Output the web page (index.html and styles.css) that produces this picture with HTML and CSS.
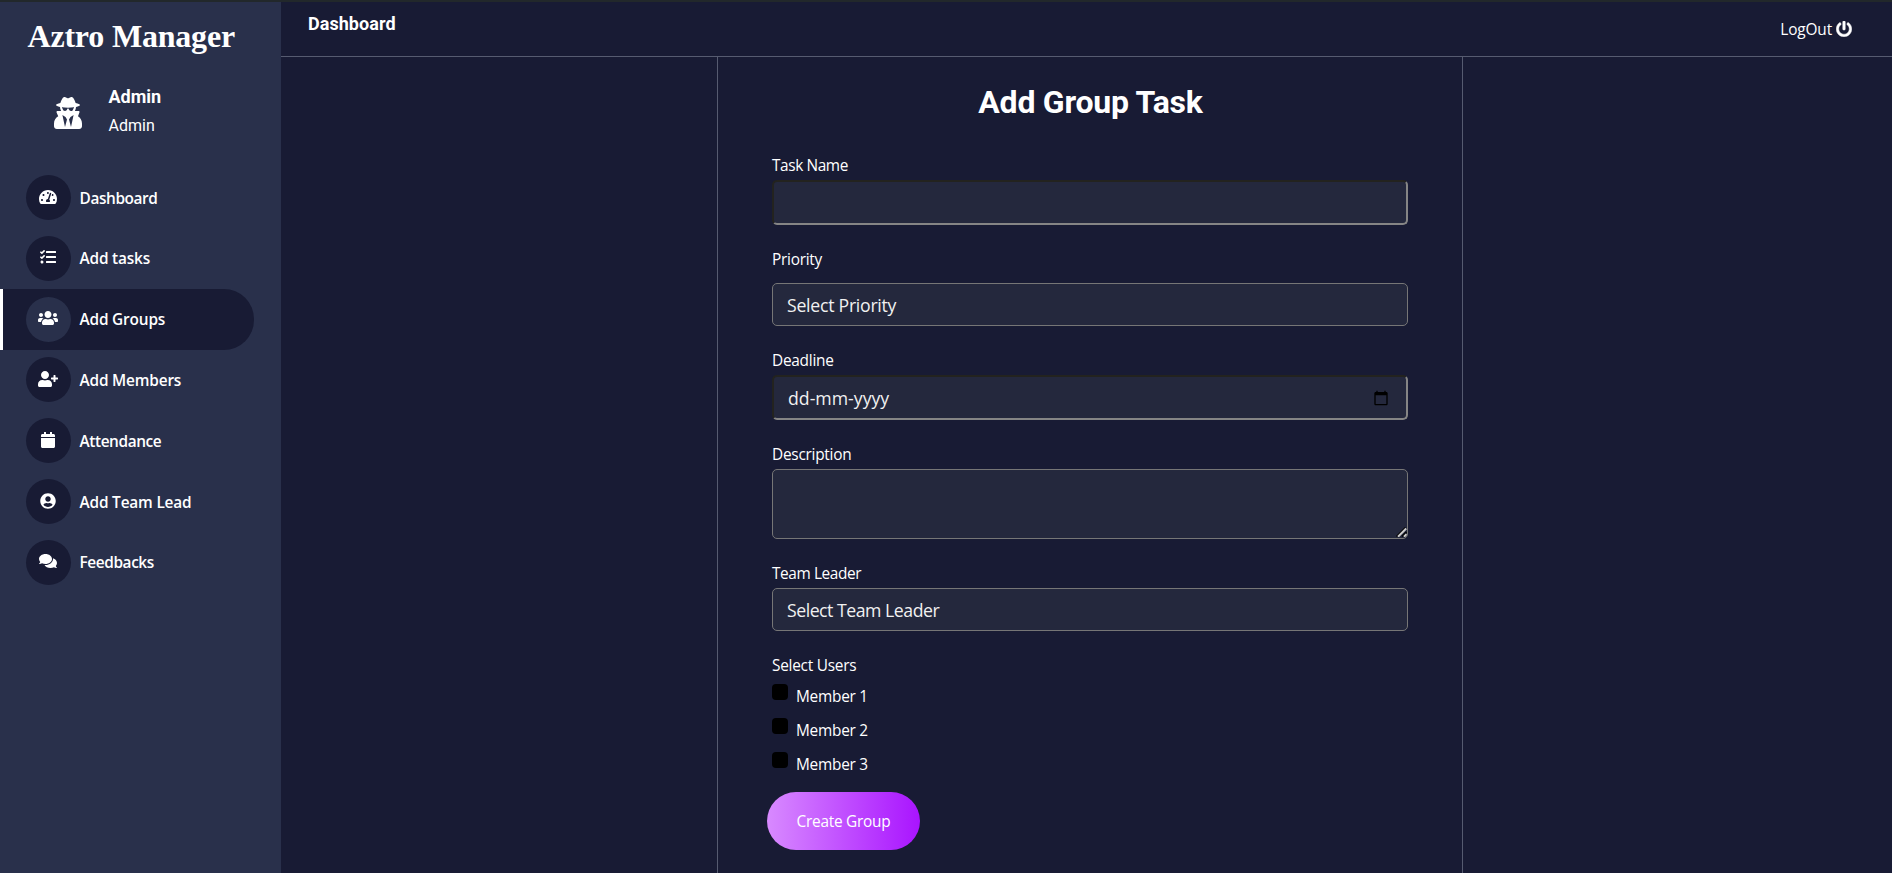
FILE: index.html
```html
<!DOCTYPE html>
<html lang="en">
<head>
<meta charset="utf-8">
<title>Aztro Manager</title>
<link rel="stylesheet" href="styles.css">
</head>
<body>
<div class="app">
  <aside class="sidebar">
    <h1 class="brand">Aztro Manager</h1>
    <div class="profile">
      <svg class="avatar" viewBox="0 0 448 512"><path d="M383.9 308.3l23.9-62.6c4-10.5-3.7-21.7-15-21.7h-58.5c11-18.9 17.8-40.6 17.8-64v-.3c39.2-7.8 64-19.1 64-31.7 0-13.3-27.3-25.1-70.1-33-9.2-32.8-27-65.8-40.6-82.8-9.5-11.9-25.9-15.6-39.5-8.8l-27.6 13.8c-9 4.5-19.6 4.5-28.6 0L182.1 3.4c-13.6-6.8-30-3.1-39.5 8.8-13.5 17-31.4 50-40.6 82.8-42.7 7.9-70 19.7-70 33 0 12.6 24.8 23.9 64 31.7v.3c0 23.4 6.8 45.1 17.8 64H56.3c-11.5 0-19.2 11.7-14.7 22.3l25.8 60.2C27.3 329.8 0 372.7 0 422.4v44.8C0 491.9 20.1 512 44.8 512h358.4c24.7 0 44.8-20.1 44.8-44.8v-44.8c0-48.4-25.8-90.4-64.1-114.1zM176 480l-41.6-192 49.6 32 24 40-32 120zm96 0l-32-120 24-40 49.6-32L272 480zm41.7-298.5c-3.9 11.9-7 24.6-16.5 33.4-10.1 9.3-48 22.4-64-25-2.8-8.4-15.4-8.4-18.3 0-17 50.2-56 32.4-64 25-9.5-8.8-12.7-21.5-16.5-33.4-.8-2.5-6.3-5.7-6.3-5.8v-10.8c28.3 3.6 61 5.8 96 5.8s67.7-2.1 96-5.8v10.8c-.1.1-5.6 3.2-6.4 5.8z"/></svg>
      <div class="who">
        <div class="who-name">Admin</div>
        <div class="who-role">Admin</div>
      </div>
    </div>
    <nav class="nav">
      <a class="nav-item"><span class="dot"><svg width="18" height="16" viewBox="0 0 576 512"><path d="M288 32C128.940 32 0 160.940 0 320c0 52.800 14.250 102.260 39.060 144.800 5.610 9.620 16.300 15.200 27.440 15.200h443c11.140 0 21.830-5.580 27.440-15.200C561.750 422.260 576 372.800 576 320c0-159.060-128.940-288-288-288zm0 64c14.710 0 26.580 10.130 30.320 23.650-1.110 2.260-2.640 4.230-3.450 6.670l-9.220 27.670c-5.130 3.490-10.970 6.010-17.640 6.010-17.670 0-32-14.330-32-32S270.330 96 288 96zM96 384c-17.670 0-32-14.330-32-32s14.330-32 32-32 32 14.330 32 32-14.330 32-32 32zm48-160c-17.670 0-32-14.330-32-32s14.330-32 32-32 32 14.330 32 32-14.330 32-32 32zm246.770-72.410l-61.330 184C343.130 347.330 352 364.540 352 384c0 11.720-3.380 22.550-8.880 32H232.880c-5.500-9.450-8.880-20.280-8.880-32 0-33.940 26.500-61.430 59.900-63.590l61.340-184.010c4.170-12.560 17.730-19.450 30.360-15.170 12.570 4.190 19.350 17.790 15.170 30.360zm14.660 57.200l15.520-46.550c3.470-1.290 7.130-2.230 11.050-2.230 17.670 0 32 14.330 32 32s-14.330 32-32 32c-11.380-.01-20.890-6.280-26.570-15.220zM480 384c-17.670 0-32-14.330-32-32s14.330-32 32-32 32 14.330 32 32-14.330 32-32 32z"/></svg></span><span class="nav-text tight">Dashboard</span></a>
      <a class="nav-item"><span class="dot"><svg width="16" height="16" viewBox="0 0 512 512"><path d="M139.61 35.5a12 12 0 0 0-17 0L58.93 98.81l-22.7-22.12a12 12 0 0 0-17 0L3.53 92.41a12 12 0 0 0 0 17l47.59 47.4a12.78 12.78 0 0 0 17.61 0l15.59-15.62L156.52 69a12.09 12.09 0 0 0 .09-17zm0 159.19a12 12 0 0 0-17 0l-63.68 63.72-22.7-22.1a12 12 0 0 0-17 0L3.53 252a12 12 0 0 0 0 17L51 316.5a12.77 12.77 0 0 0 17.6 0l15.7-15.69 72.2-72.22a12 12 0 0 0 .09-16.9zM64 368c-26.49 0-48.59 21.5-48.59 48S37.53 464 64 464a48 48 0 0 0 0-96zm432 16H208a16 16 0 0 0-16 16v32a16 16 0 0 0 16 16h288a16 16 0 0 0 16-16v-32a16 16 0 0 0-16-16zm0-320H208a16 16 0 0 0-16 16v32a16 16 0 0 0 16 16h288a16 16 0 0 0 16-16V80a16 16 0 0 0-16-16zm0 160H208a16 16 0 0 0-16 16v32a16 16 0 0 0 16 16h288a16 16 0 0 0 16-16v-32a16 16 0 0 0-16-16z"/></svg></span><span class="nav-text">Add tasks</span></a>
      <a class="nav-item active"><span class="dot"><svg width="20" height="16" viewBox="0 0 640 512"><path d="M96 224c35.3 0 64-28.7 64-64s-28.7-64-64-64-64 28.7-64 64 28.7 64 64 64zm448 0c35.3 0 64-28.7 64-64s-28.7-64-64-64-64 28.7-64 64 28.7 64 64 64zm32 32h-64c-17.6 0-33.5 7.1-45.1 18.6 40.3 22.1 68.9 62 75.1 109.4h66c17.7 0 32-14.3 32-32v-32c0-35.3-28.7-64-64-64zm-256 0c61.9 0 112-50.1 112-112S381.9 32 320 32 208 82.1 208 144s50.1 112 112 112zm76.8 32h-8.3c-20.8 10-43.9 16-68.5 16s-47.6-6-68.5-16h-8.3C179.6 288 128 339.6 128 403.2V432c0 26.5 21.5 48 48 48h288c26.5 0 48-21.5 48-48v-28.8c0-63.6-51.6-115.2-115.2-115.2zm-223.7-13.4C161.5 263.1 145.6 256 128 256H64c-35.3 0-64 28.7-64 64v32c0 17.7 14.3 32 32 32h65.9c6.3-47.4 34.9-87.3 75.2-109.4z"/></svg></span><span class="nav-text">Add Groups</span></a>
      <a class="nav-item"><span class="dot"><svg width="20" height="16" viewBox="0 0 640 512"><path d="M624 208h-64v-64c0-8.8-7.2-16-16-16h-32c-8.8 0-16 7.2-16 16v64h-64c-8.8 0-16 7.2-16 16v32c0 8.8 7.2 16 16 16h64v64c0 8.8 7.2 16 16 16h32c8.8 0 16-7.2 16-16v-64h64c8.8 0 16-7.2 16-16v-32c0-8.8-7.2-16-16-16zm-400 48c70.7 0 128-57.3 128-128S294.7 0 224 0 96 57.3 96 128s57.3 128 128 128zm89.6 32h-16.7c-22.2 10.2-46.9 16-72.9 16s-50.6-5.8-72.9-16h-16.7C60.2 288 0 348.2 0 422.4V464c0 26.5 21.5 48 48 48h352c26.5 0 48-21.5 48-48v-41.6c0-74.2-60.2-134.4-134.4-134.4z"/></svg></span><span class="nav-text">Add Members</span></a>
      <a class="nav-item"><span class="dot"><svg width="14" height="16" viewBox="0 0 448 512"><path d="M12 192h424c6.6 0 12 5.4 12 12v260c0 26.5-21.5 48-48 48H48c-26.5 0-48-21.5-48-48V204c0-6.6 5.4-12 12-12zm436-44v-36c0-26.5-21.5-48-48-48h-48V12c0-6.6-5.4-12-12-12h-40c-6.6 0-12 5.4-12 12v52H160V12c0-6.6-5.4-12-12-12h-40c-6.6 0-12 5.4-12 12v52H48C21.5 64 0 85.5 0 112v36c0 6.6 5.4 12 12 12h424c6.6 0 12-5.4 12-12z"/></svg></span><span class="nav-text tight">Attendance</span></a>
      <a class="nav-item"><span class="dot"><svg width="16" height="16" viewBox="0 0 496 512"><path d="M248 8C111 8 0 119 0 256s111 248 248 248 248-111 248-248S385 8 248 8zm0 96c48.6 0 88 39.4 88 88s-39.4 88-88 88-88-39.4-88-88 39.4-88 88-88zm0 344c-58.7 0-111.3-26.6-146.5-68.2 18.8-35.4 55.6-59.8 98.5-59.8 2.4 0 4.8.4 7.1 1.1 13 4.2 26.6 6.9 40.9 6.9 14.3 0 28-2.7 40.9-6.9 2.3-.7 4.7-1.1 7.1-1.1 42.9 0 79.7 24.4 98.5 59.8C359.3 421.4 306.7 448 248 448z"/></svg></span><span class="nav-text">Add Team Lead</span></a>
      <a class="nav-item"><span class="dot"><svg width="18" height="16" viewBox="0 0 576 512"><path d="M416 192c0-88.4-93.1-160-208-160S0 103.600 0 192c0 34.300 14.100 65.900 38 92-13.400 30.200-35.500 54.200-35.800 54.500-2.200 2.300-2.800 5.700-1.500 8.700S4.800 352 8 352c36.600 0 66.900-12.300 88.700-25 32.200 15.700 70.300 25 111.300 25 114.900 0 208-71.600 208-160zm122 220c23.900-26 38-57.700 38-92 0-66.900-53.500-124.200-129.300-148.100.9 6.600 1.300 13.300 1.300 20.100 0 105.900-107.700 192-240 192-10.800 0-21.300-.8-31.700-1.900C207.800 439.600 281.800 480 368 480c41 0 79.100-9.200 111.300-25 21.800 12.700 52.100 25 88.700 25 3.200 0 6.100-1.900 7.300-4.800 1.300-2.900.7-6.300-1.500-8.700-.3-.3-22.400-24.200-35.800-54.500z"/></svg></span><span class="nav-text tight">Feedbacks</span></a>
    </nav>
  </aside>
  <div class="page">
    <header class="topbar">
      <div class="crumb">Dashboard</div>
      <a class="logout"><span>LogOut</span><svg width="16" height="16" viewBox="0 0 512 512" stroke="currentColor" stroke-width="14"><path d="M400 54.1c63 45 104 118.6 104 201.9 0 136.8-110.8 247.7-247.5 248C120 504.3 8.2 393 8 256.4 7.9 173.1 48.900 99.3 111.8 54.2c11.700-8.3 28-4.8 35 7.700L162.6 90c5.900 10.5 3.1 23.8-6.6 31-41.5 30.8-68 79.6-68 134.9-.1 92.3 74.5 168.1 168 168.1 91.6 0 168.6-74.2 168-169.1-.3-51.8-24.7-101.8-68.1-134-9.700-7.200-12.4-20.5-6.5-30.9l15.8-28.1c7-12.4 23.2-16.1 34.8-7.8zM296 264V24c0-13.3-10.700-24-24-24h-32c-13.3 0-24 10.700-24 24v240c0 13.3 10.700 24 24 24h32c13.3 0 24-10.700 24-24z"/></svg></a>
    </header>
    <main class="panel">
      <h2 class="title">Add Group Task</h2>
      <form class="form">
        <div class="field name"><label class="tight">Task Name</label><input class="control inset" type="text"></div>
        <div class="field priority"><label>Priority</label><div class="control select">Select Priority</div></div>
        <div class="field deadline"><label>Deadline</label>
          <div class="control inset date"><span>dd-mm-yyyy</span><svg width="16" height="16" viewBox="0 0 24 24"><path d="M20 3h-1V1h-2v2H7V1H5v2H4c-1.100 0-2 .9-2 2v16c0 1.100.9 2 2 2h16c1.100 0 2-.9 2-2V5c0-1.100-.9-2-2-2zm0 18H4V8h16v13z"/></svg></div>
        </div>
        <div class="field description"><label>Description</label>
          <div class="area-wrap"><textarea class="control area"></textarea>
            <svg class="grip" width="11" height="10" viewBox="0 0 11 10"><g fill="none" stroke-width="1.500"><path stroke="#000" d="M.5 9.500L9.500.5M6 9.500L10.500 5"/><path stroke="#ccc" stroke-width="2" d="M2 9.700L10.200 1.500M8 9.700L10.500 7.200"/></g></svg>
          </div>
        </div>
        <div class="field leader"><label class="tight">Team Leader</label><div class="control select tight-select">Select Team Leader</div></div>
        <div class="field users"><label>Select Users</label>
          <div class="member"><i class="box"></i><span>Member 1</span></div>
          <div class="member"><i class="box"></i><span>Member 2</span></div>
          <div class="member"><i class="box"></i><span>Member 3</span></div>
        </div>
        <button class="submit" type="button">Create Group</button>
      </form>
    </main>
  </div>
</div>
</body>
</html>
```
FILE: styles.css
```css
* { box-sizing: border-box; }
body {
  margin: 0;
  height: 873px;
  overflow: hidden;
  border-top: 2px solid #22282b;
  background: #181b34;
  color: #fff;
  font: 15.4px/24px "Open Sans", "Noto Sans", sans-serif;
  letter-spacing: -0.25px;
}
svg { fill: currentColor; display: block; flex: none; }
.app { display: flex; height: 871px; }

/* Sidebar */
.sidebar { width: 281px; flex: none; background: #29304b; }
.brand {
  margin: 0;
  padding: 17px 0 0 27.5px;
  font: bold 32px/34px "Liberation Serif", serif;
  letter-spacing: -0.2px;
}
.profile { display: flex; align-items: flex-start; padding: 29px 0 0 53px; }
.avatar { width: 30px; height: 32px; margin-top: 15px; }
.who { margin-left: 25.5px; font-family: Roboto, sans-serif; letter-spacing: 0; }
.who-name { font-size: 18px; font-weight: 700; line-height: 30px; }
.who-role { font-size: 16px; line-height: 28px; }
.nav { padding-top: 27.2px; }
.nav-item {
  display: flex;
  align-items: center;
  gap: 8.5px;
  width: 254px;
  height: 60.8px;
  padding-left: 26px;
  font-weight: 600;
  letter-spacing: -0.18px;
}
.nav-text { padding-top: 2px; }
.tight { letter-spacing: -0.4px; }
.active {
  padding-left: 23px;
  border-left: 3px solid #fff;
  border-radius: 0 30px 30px 0;
  background: #181b34;
}
.dot {
  display: flex;
  align-items: center;
  justify-content: center;
  width: 45px;
  height: 45px;
  padding: 0 1px 2px 0;
  border-radius: 50%;
  background: #181b34;
}
.active .dot { background: #29304b; }

/* Top bar */
.page { flex: 1; display: flex; flex-direction: column; align-items: stretch; }
.topbar {
  display: flex;
  justify-content: space-between;
  height: 55px;
  flex: none;
  padding: 0 40px 0 27px;
  border-bottom: 1px solid #565b70;
}
.crumb { padding-top: 10px; font: bold 18px/24px Roboto, sans-serif; letter-spacing: 0.05px; }
.logout { display: flex; align-items: flex-start; gap: 4px; margin-top: 16px; letter-spacing: -0.15px; }
.logout svg { margin-top: 3px; }

/* Form panel */
.panel {
  flex: 1;
  width: 746px;
  margin-left: 436px;
  padding: 25px 53px 0 54px;
  border: solid #565b70;
  border-width: 0 1px;
}
.title {
  margin: 0 0 31px;
  text-align: center;
  font: bold 32px/40px Roboto, sans-serif;
  letter-spacing: -0.25px;
}
.form { display: flex; flex-direction: column; }
.field { display: flex; flex-direction: column; }
.field label { height: 24px; line-height: 26px; flex: none; }
.name { height: 94px; gap: 3px; }
.priority { height: 101px; gap: 12px; }
.deadline { height: 94px; gap: 3px; }
.description { height: 119px; gap: 3px; }
.leader { height: 92px; gap: 3px; }
.users { height: 139px; }
.control {
  width: 636px;
  margin: 0;
  border: 1px solid #767676;
  border-radius: 5px;
  background: #24283d;
  color: #f1f1f1;
  font-family: inherit;
  font-size: 17.7px;
  outline: none;
}
.inset {
  height: 45px;
  border: 2px solid;
  border-color: #23231f #858585 #858585 #23231f;
}
.select { height: 43px; padding: 1px 14px 0; line-height: 41px; letter-spacing: -0.27px; }
.tight-select { letter-spacing: -0.48px; }
.date {
  display: flex;
  align-items: center;
  justify-content: space-between;
  padding: 0 17px 0 14px;
  letter-spacing: 0;
}
.date svg { color: #000; }
.area-wrap { position: relative; height: 70px; }
.area { display: block; height: 70px; resize: none; }
.grip { position: absolute; right: 2px; bottom: 2px; }
.member { display: flex; gap: 8px; height: 34px; line-height: 26px; }
.member:nth-of-type(1) { margin-top: 7px; }
.box { width: 16px; height: 16px; border-radius: 4px; background: #000; }
.submit {
  align-self: flex-start;
  width: 153px;
  height: 58px;
  margin-left: -5px;
  padding: 2px 0 0;
  border: 0;
  border-radius: 29px;
  background: linear-gradient(to right, #d88aff, #a914ff);
  color: #fff;
  font: inherit;
  letter-spacing: inherit;
}
```
